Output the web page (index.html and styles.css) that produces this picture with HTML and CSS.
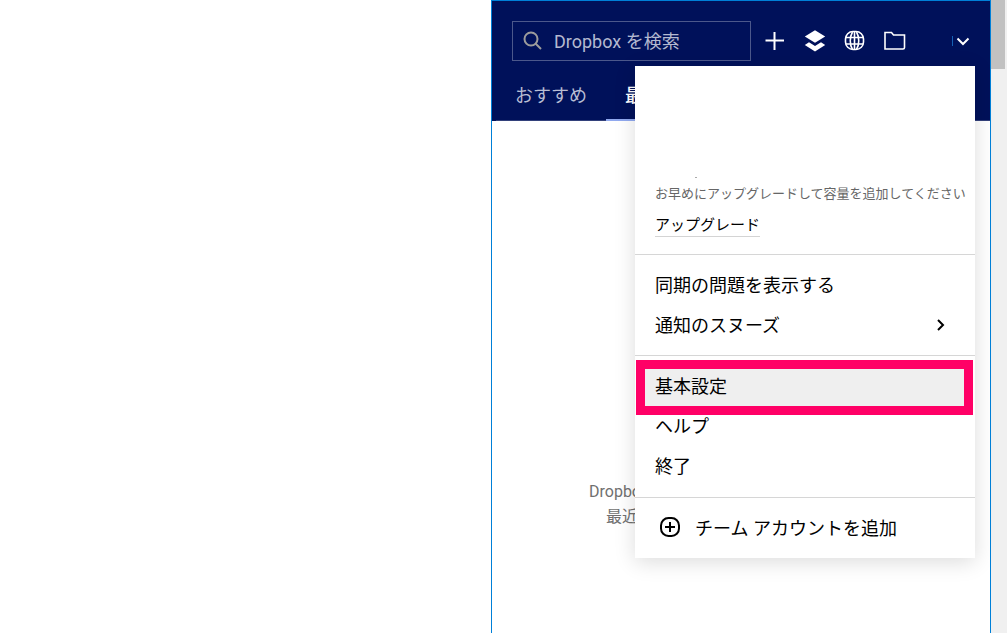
FILE: index.html
```html
<!DOCTYPE html>
<html lang="ja">
<head>
<meta charset="utf-8">
<title>Dropbox</title>
<link rel="stylesheet" href="styles.css">
</head>
<body>
<div class="desktop">
  <main class="app">
    <header class="header">
      <div class="toolbar">
        <label class="search">
          <svg class="search-icon" viewBox="0 0 20 20" width="20" height="20"><circle cx="8" cy="8" r="6.500"/><path d="M12.500 12.500l5.500 5.500"/></svg>
          <input class="search-input" type="text" placeholder="Dropbox を検索" aria-label="Dropbox を検索">
        </label>
        <button class="tool" type="button" aria-label="追加"><svg viewBox="0 0 24 24" width="24" height="24"><path d="M11.500 3v18M2.500 11.500h18.500"/></svg></button>
        <button class="tool" type="button" aria-label="レイヤー"><svg class="solid" viewBox="0 0 24 24" width="24" height="24"><path d="M12 1.300l10.200 6.200L12 13.800 1.800 7.500z"/><path d="M6 13.200l6 3.700 6-3.700 4.200 2.700L12 22.500 1.800 15.900z"/></svg></button>
        <button class="tool" type="button" aria-label="ウェブ"><svg class="fine" viewBox="0 0 24 24" width="24" height="24"><rect x="2.500" y="2.500" width="18" height="18" rx="7.500"/><path d="M11.500 2.500v18M3 8.500h17M3 15h17M9.500 3C6.500 8 6.500 15.500 9.500 20.500M13.500 3c3 5 3 12.500 0 17.500"/></svg></button>
        <button class="tool" type="button" aria-label="フォルダ"><svg class="fine" viewBox="0 0 24 24" width="24" height="24"><path d="M2 20V3.500h6.500l2 2.500h11V18.500a1.500 1.500 0 0 1-1.500 1.500z"/></svg></button>
        <button class="account" type="button" aria-label="アカウント"><span class="avatar-edge"></span><svg viewBox="0 0 14 14" width="14" height="14"><path d="M1.500 4.500L7 10l5.500-5.500"/></svg></button>
      </div>
      <nav class="tabs">
        <a class="tab" href="#recommended">おすすめ</a>
        <a class="tab current" href="#recent">最近</a>
      </nav>
    </header>
    <section class="empty">
      <p>Dropbox</p>
      <p class="second">最近</p>
    </section>
    <div class="menu">
      <section class="storage">
        <span class="mark"></span>
        <p class="note">お早めにアップグレードして容量を追加してください</p>
        <a class="upgrade" href="#upgrade">アップグレード</a>
      </section>
      <section class="group">
        <button class="item" type="button">同期の問題を表示する</button>
        <button class="item" type="button">通知のスヌーズ<svg class="chevron" viewBox="0 0 14 14" width="14" height="14"><path d="M5 3l5 5-5 5"/></svg></button>
      </section>
      <section class="group main-group">
        <button class="item selected" type="button"><span class="label">基本設定</span></button>
        <button class="item" type="button">ヘルプ</button>
        <button class="item" type="button">終了</button>
      </section>
      <section class="group">
        <button class="item add" type="button"><svg viewBox="0 0 22 22" width="22" height="22"><rect x="2" y="2" width="18" height="18" rx="7.500"/><path d="M11 6v10M6 11h10"/></svg>チーム アカウントを追加</button>
      </section>
    </div>
  </main>
  <div class="scrollbar"><div class="thumb"></div></div>
</div>
</body>
</html>
```
FILE: styles.css
```css
* { box-sizing: border-box; }
body {
  margin: 0;
  background: #fff;
  font-family: Roboto, "Noto Sans CJK JP", sans-serif;
  font-weight: 400;
  color: #000;
}
p { margin: 0; }
button {
  border: 0;
  padding: 0;
  background: none;
  font: inherit;
  color: inherit;
}
svg {
  display: block;
  flex: none;
  fill: none;
  stroke: currentColor;
  stroke-width: 2;
}
.solid { fill: currentColor; stroke: none; }
.fine { stroke-width: 1.6; }
.desktop {
  display: flex;
  justify-content: flex-end;
  min-height: 100vh;
}
.app {
  position: relative;
  width: 500px;
  border: 1px solid #0080d8;
  border-bottom: 0;
}
.header {
  height: 120px;
  padding-top: 20px;
  background: #00115a;
  color: #fff;
}
.toolbar {
  display: flex;
  align-items: center;
  padding: 0 16px 0 20px;
}
.search {
  display: flex;
  align-items: center;
  gap: 11px;
  width: 239px;
  height: 40px;
  margin-right: 4px;
  padding: 0 10px;
  border: 1px solid #4c588b;
}
.search-icon { color: #9c9c9c; }
.search-input {
  flex: 1;
  min-width: 0;
  padding: 0;
  border: 0;
  outline: 0;
  background: none;
  font: inherit;
  font-size: 18px;
  color: #fff;
}
.search-input::placeholder { color: #b4b9d0; opacity: 1; }
.tool {
  display: grid;
  place-items: center;
  width: 40px;
  height: 40px;
}
.account {
  display: flex;
  align-items: center;
  gap: 3px;
  margin-left: auto;
  padding-right: 4px;
}
.avatar-edge {
  width: 1px;
  height: 10px;
  background: #1560b4;
}
.tabs {
  display: flex;
  height: 60px;
  margin-left: 4px;
  border-bottom: 1px solid #33417b;
}
.tab {
  width: 110px;
  height: 60px;
  padding-left: 19px;
  font-size: 18px;
  line-height: 70px;
  color: #b8bdd3;
  text-decoration: none;
}
.current {
  border-bottom: 2px solid #91a9ef;
  color: #fff;
  font-weight: 500;
}
.empty {
  padding: 358px 0 0 97px;
  font-size: 16px;
  line-height: 25px;
  color: #707070;
}
.second { padding-left: 17px; }
.menu {
  position: absolute;
  top: 65px;
  right: 15px;
  width: 340px;
  background: #fff;
  box-shadow: 0 4px 20px rgba(0, 0, 0, .14);
}
.storage {
  padding: 111px 0 17px 20px;
}
.mark {
  display: block;
  width: 2px;
  height: 1px;
  margin-left: 40px;
  background: #aaa;
}
.note {
  padding-top: 6px;
  font-size: 13px;
  line-height: 20px;
  color: #666;
  white-space: nowrap;
}
.upgrade {
  display: inline-block;
  margin-top: 10px;
  border-bottom: 1px solid #d4d4d4;
  font-size: 15px;
  line-height: 22px;
  color: #000;
  text-decoration: none;
}
.group {
  padding: 10px 0;
  border-top: 1px solid #d6d6d6;
}
.main-group { padding-bottom: 11px; }
.item {
  display: flex;
  align-items: center;
  position: relative;
  width: 100%;
  height: 40px;
  padding: 0 28px 2px 20px;
  font-size: 18px;
  text-align: left;
}
.chevron { margin-left: auto; }
.selected::before {
  content: "";
  position: absolute;
  inset: -6px 2px -9px 1px;
  border: 9px solid #ff0066;
  background: #efefef;
}
.label { position: relative; }
.add {
  gap: 14px;
  padding-left: 24px;
}
.scrollbar {
  width: 16px;
  background: #f0f0f0;
}
.thumb {
  width: 14px;
  height: 69px;
  background: #c1c1c1;
}
```
